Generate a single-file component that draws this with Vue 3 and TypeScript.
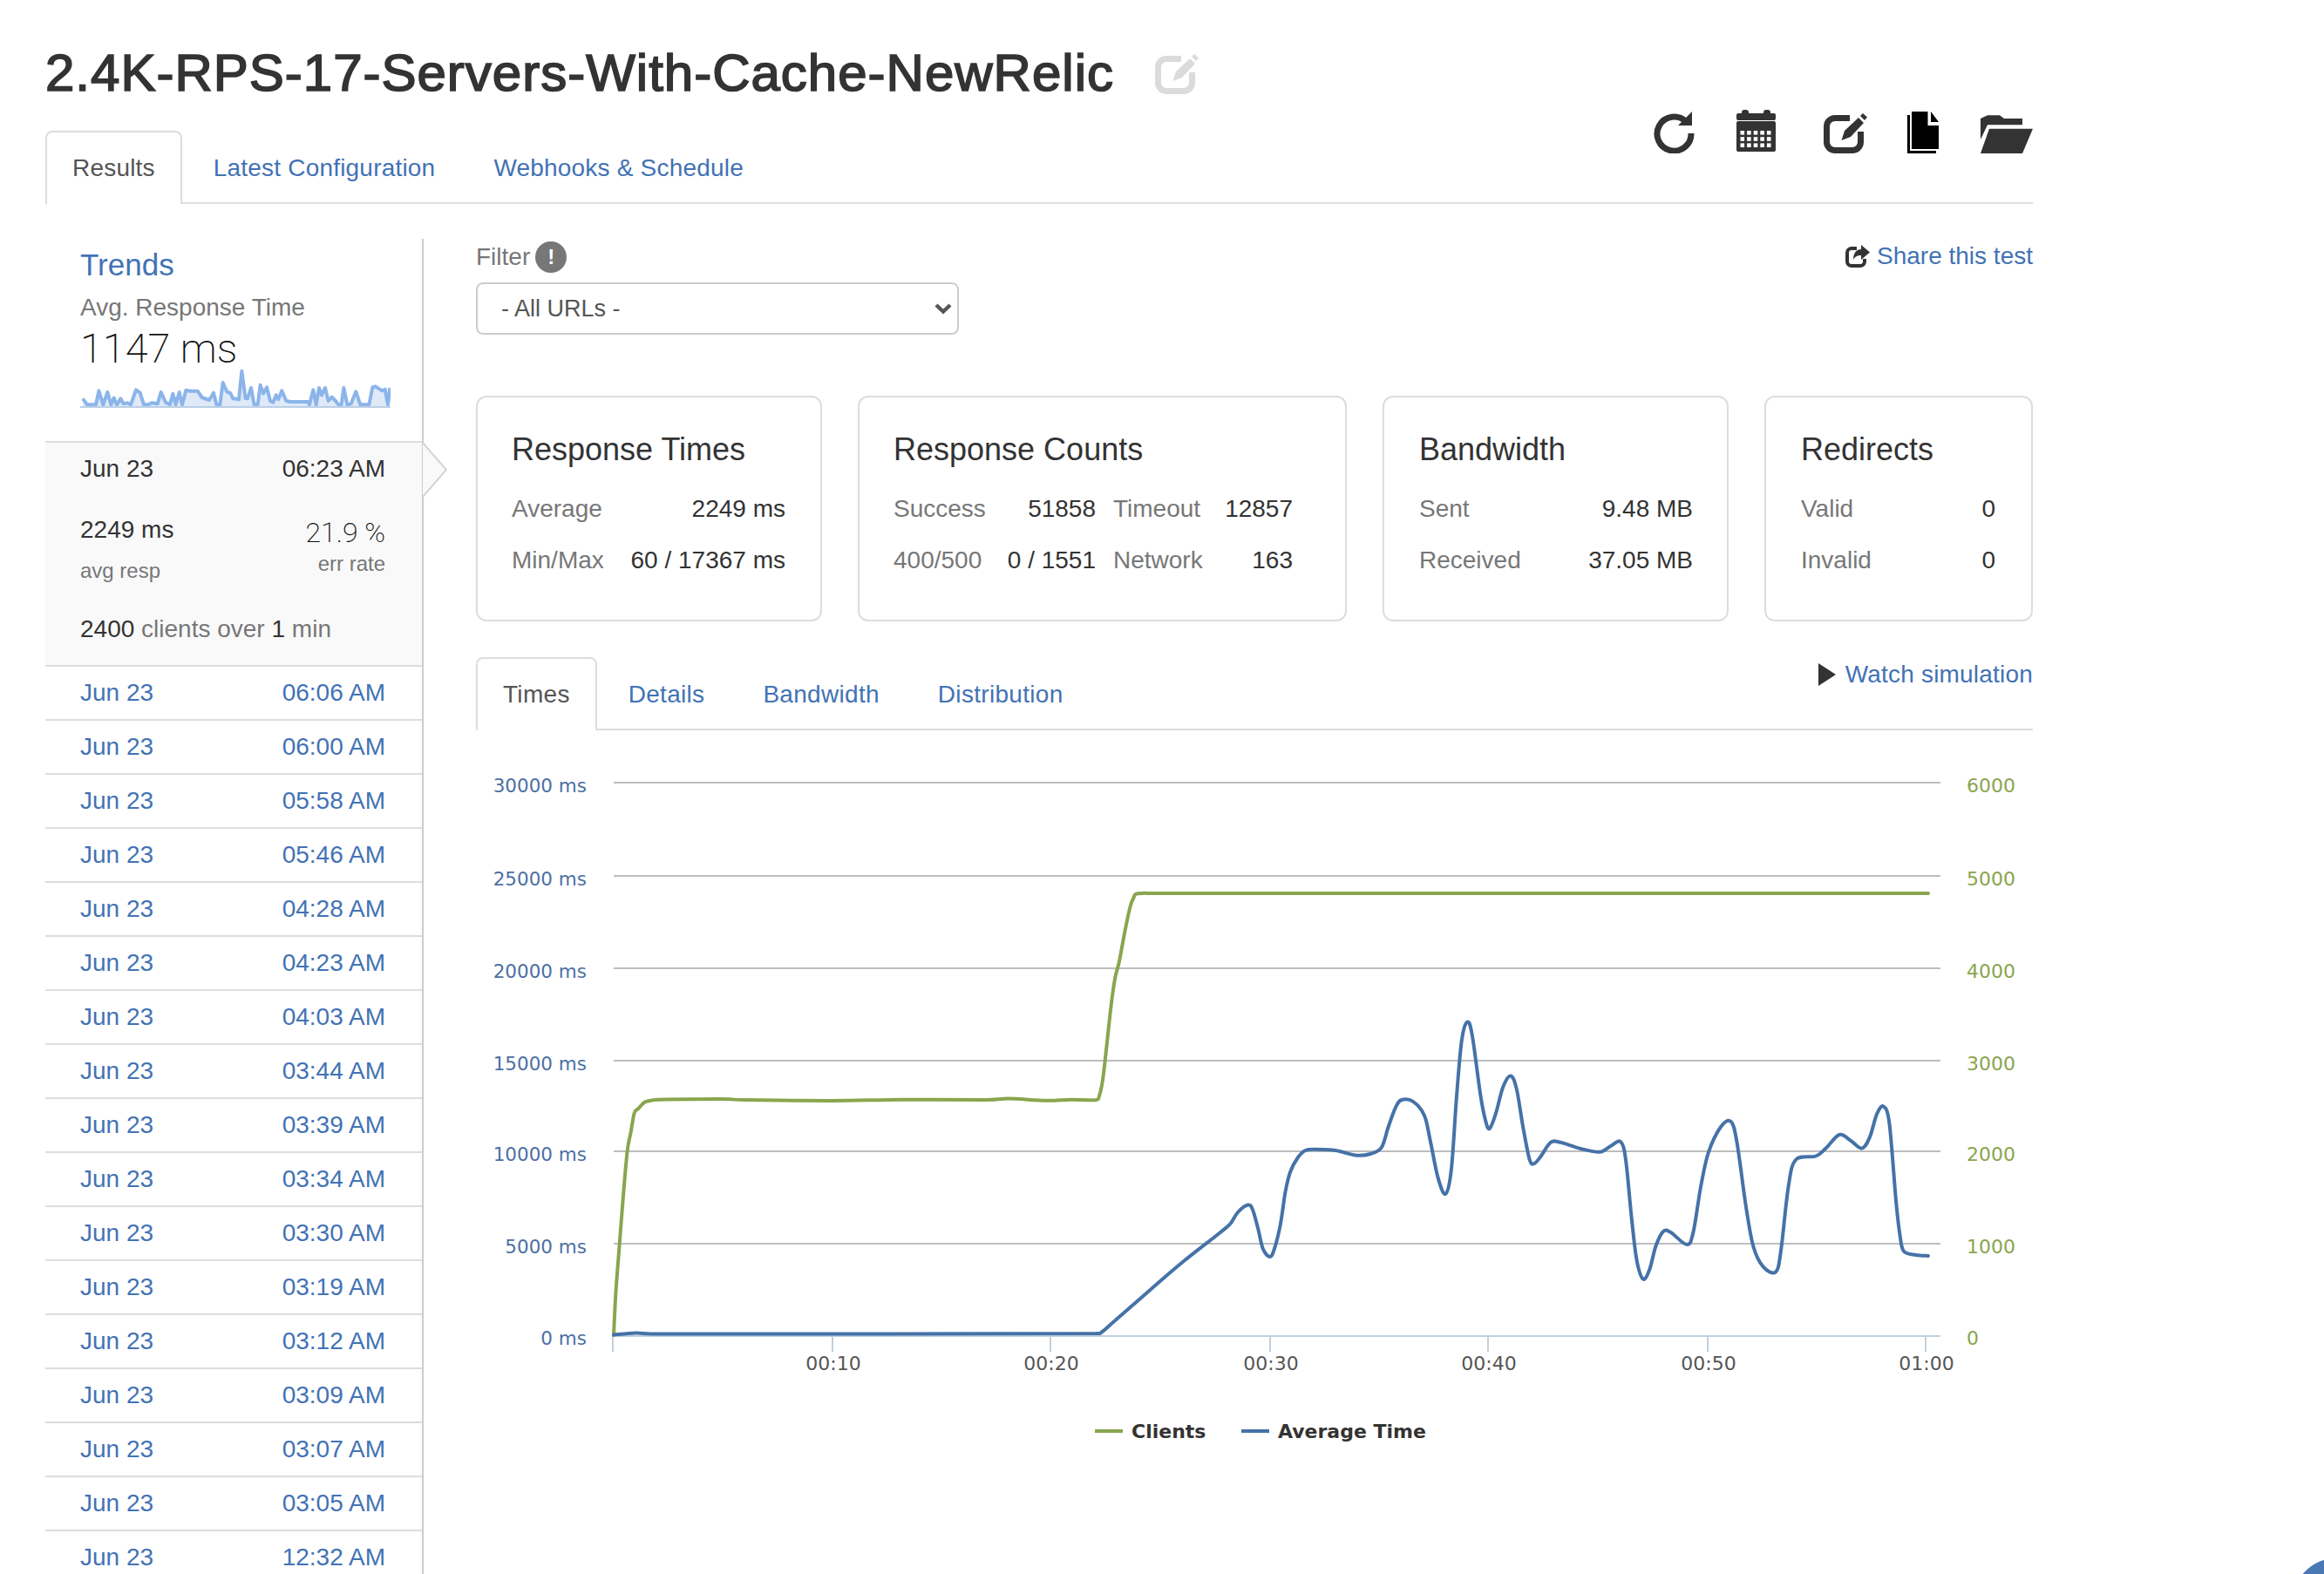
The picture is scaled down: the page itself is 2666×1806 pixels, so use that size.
<script setup lang="ts">
type Pt = [number, number];

const history = [
  '06:06 AM', '06:00 AM', '05:58 AM', '05:46 AM', '04:28 AM', '04:23 AM',
  '04:03 AM', '03:44 AM', '03:39 AM', '03:34 AM', '03:30 AM', '03:19 AM',
  '03:12 AM', '03:09 AM', '03:07 AM', '03:05 AM', '12:32 AM',
];

const calendarCells: Pt[] = [];
for (let row = 0; row < 3; row++) {
  for (let col = 0; col < 5; col++) {
    calendarCells.push([4.5 + col * 7.6, 24 + row * 7.2]);
  }
}

// sparkline points, in px of its own 356x46 box
const sparkRaw: Pt[] = [
  [75,172],[90,193],[120,193],[130,145],[145,193],[160,150],[172,193],[182,170],[192,193],[205,172],
  [215,190],[228,187],[240,193],[258,142],[272,152],[285,193],[300,193],[312,187],[332,190],[344,150],
  [360,185],[375,193],[385,155],[395,193],[407,150],[417,193],[430,143],[445,146],[470,146],[485,168],
  [510,177],[525,152],[535,193],[547,193],[557,117],[572,150],[582,152],[592,172],[612,175],[622,77],
  [635,172],[642,172],[654,135],[665,193],[677,193],[686,125],[696,155],[708,133],[720,180],[730,185],
  [740,160],[748,175],[760,145],[775,180],[790,183],[850,183],[855,193],[868,142],[878,193],[888,135],
  [897,160],[909,135],[920,180],[932,167],[945,180],[955,193],[965,193],[973,135],[985,193],[998,190],
  [1015,148],[1030,193],[1060,193],[1072,133],[1082,130],[1105,145],[1115,140],[1125,193],[1132,135],
];
const spark = sparkRaw.map(([x, y]): Pt => [x / 3 - 22, y / 3 - 23]);
const sparkLine = 'M' + spark.map((p) => p.join(' ')).join('L');
const sparkArea = `${sparkLine}L${spark[spark.length - 1][0]} 44L${spark[0][0]} 44Z`;

// chart data is in page px, the svg viewBox starts at the chart's page offset
const clients: Pt[] = [
  [704,1532],[706.5,1482],[710.5,1430],[715,1372],[719.7,1320],[723.7,1299],[727.7,1277],[732.3,1272],
  [739,1265],[746.6,1262.7],[755,1261.7],[827,1261],[855.7,1262],[953,1263],[1033.6,1261.7],[1131,1262],
  [1157,1260.6],[1200,1262.7],[1228.8,1261.7],[1257.5,1262],[1261,1257.5],[1265,1239],[1269,1205],
  [1274.7,1153],[1279.3,1121.5],[1284,1103],[1290.8,1066.6],[1296.5,1040.4],[1300.5,1030],[1305,1025.3],
  [1343.6,1025],[2212,1025],
];
const avgTime: Pt[] = [
  [704,1531.5],[729.4,1529.5],[755,1530.5],[1257.5,1530],[1264.4,1528],[1280.5,1514],[1332,1469],[1358,1447],
  [1400,1414],[1411.5,1404],[1420,1391],[1431.6,1382.5],[1437,1388],[1443,1409],[1448.8,1432.7],[1456.8,1442],
  [1462,1432.7],[1469,1404],[1474.6,1367],[1480.4,1344],[1489,1328],[1497.6,1320],[1509,1318.7],[1532,1320],
  [1555,1325.5],[1572,1324],[1584.8,1316.6],[1592.3,1294],[1601,1270.6],[1607.8,1262],[1621,1263.8],[1634,1280],
  [1641,1310],[1649.7,1351.6],[1658.3,1370],[1665,1341],[1671,1257.5],[1676.7,1194.7],[1683,1172.8],[1688.7,1187],
  [1698.5,1257.5],[1704.2,1286],[1708.8,1295],[1715.7,1278.4],[1724.3,1247],[1733,1234.5],[1739.8,1249.6],
  [1747.3,1294],[1754.7,1330.7],[1760,1335],[1767.4,1327],[1778.8,1310.8],[1790.3,1310.8],[1813.3,1318],
  [1835,1321.8],[1847.7,1315],[1859,1310],[1865,1330.7],[1871.8,1398.7],[1877.6,1445.8],[1885,1467.7],
  [1892.5,1456],[1899.4,1430],[1908,1413],[1916.6,1414],[1935,1428],[1942.4,1414],[1951,1362],[1959.7,1322.9],
  [1974,1293],[1985.5,1286.8],[1992.4,1309.8],[2002.7,1383],[2011.3,1430],[2022.8,1453.6],[2037,1459.4],
  [2043,1435],[2051.5,1362],[2060,1330.7],[2083,1326.5],[2094.5,1317.6],[2110,1302],[2123,1308.7],[2135.9,1317.6],
  [2145,1304.6],[2153,1278.4],[2160.6,1269.5],[2167.4,1289],[2175,1377.8],[2179.5,1417],[2184,1435.8],[2198,1440],[2212,1441],
];

// catmull-rom through the points; x of the handles stays inside the segment so long gaps don't overshoot
function smooth(pts: Pt[]): string {
  let d = `M${pts[0][0]} ${pts[0][1]}`;
  for (let i = 0; i < pts.length - 1; i++) {
    const p0 = pts[Math.max(i - 1, 0)];
    const p1 = pts[i];
    const p2 = pts[i + 1];
    const p3 = pts[Math.min(i + 2, pts.length - 1)];
    const c1x = Math.min(p1[0] + (p2[0] - p0[0]) / 6, p2[0]);
    const c1y = p1[1] + (p2[1] - p0[1]) / 6;
    const c2x = Math.max(p2[0] - (p3[0] - p1[0]) / 6, p1[0]);
    const c2y = p2[1] - (p3[1] - p1[1]) / 6;
    d += `C${c1x.toFixed(1)} ${c1y.toFixed(1)} ${c2x.toFixed(1)} ${c2y.toFixed(1)} ${p2[0]} ${p2[1]}`;
  }
  return d;
}

const clientsPath = smooth(clients);
const avgPath = smooth(avgTime);

const grid = [
  { y: 898, left: '30000 ms', right: '6000' },
  { y: 1005, left: '25000 ms', right: '5000' },
  { y: 1111, left: '20000 ms', right: '4000' },
  { y: 1217, left: '15000 ms', right: '3000' },
  { y: 1321, left: '10000 ms', right: '2000' },
  { y: 1427, left: '5000 ms', right: '1000' },
];
const ticks = [
  { x: 955, label: '00:10' },
  { x: 1205, label: '00:20' },
  { x: 1457, label: '00:30' },
  { x: 1707, label: '00:40' },
  { x: 1959, label: '00:50' },
  { x: 2209, label: '01:00' },
];
</script>

<template>
  <div class="page">
    <div class="wrap">
      <div class="title-row">
        <h1 class="title">2.4K-RPS-17-Servers-With-Cache-NewRelic</h1>
        <svg class="title-edit" width="50" height="50" viewBox="0 0 50 50">
          <path d="M30 9.5H13A9.5 9.5 0 0 0 3.5 19V37A9.5 9.5 0 0 0 13 46.5H33A9.5 9.5 0 0 0 42.5 37V25" fill="none" stroke="currentColor" stroke-width="7" />
          <path d="M20.5 35L24 24L40 9L46 15L31 31Z" fill="currentColor" />
          <path d="M42 7L45 4L50 8.5L47 12Z" fill="currentColor" />
        </svg>
      </div>

      <div class="tabs">
        <a class="tab tab--active">Results</a>
        <a class="tab">Latest Configuration</a>
        <a class="tab">Webhooks &amp; Schedule</a>
        <div class="toolbar">
          <svg width="47" height="50" viewBox="0 0 47 50">
            <path d="M37 13.5A19.5 19.5 0 1 0 43 27" fill="none" stroke="#333" stroke-width="7" />
            <path d="M44 2V18H28Z" fill="#333" />
          </svg>
          <svg width="45" height="50" viewBox="0 0 45 50">
            <rect x="6" y="0" width="8" height="8" rx="3" fill="#333" />
            <rect x="31" y="0" width="8" height="8" rx="3" fill="#333" />
            <rect x="0" y="4" width="45" height="8" rx="2" fill="#333" />
            <rect x="0" y="13" width="45" height="35" rx="2" fill="#333" />
            <rect v-for="(c, i) in calendarCells" :key="i" :x="c[0]" :y="c[1]" width="4.6" height="4.6" fill="#fff" />
          </svg>
          <svg class="toolbar__edit" width="50" height="50" viewBox="0 0 50 50">
            <path d="M30 9.5H13A9.5 9.5 0 0 0 3.5 19V37A9.5 9.5 0 0 0 13 46.5H33A9.5 9.5 0 0 0 42.5 37V25" fill="none" stroke="#333" stroke-width="7" />
            <path d="M20.5 35L24 24L40 9L46 15L31 31Z" fill="#333" />
            <path d="M42 7L45 4L50 8.5L47 12Z" fill="#333" />
          </svg>
          <svg width="36" height="50" viewBox="0 0 36 50">
            <path d="M0 6H3V47H33V50H0Z" fill="#000" />
            <path d="M5 2H23.5V18H36V45H5Z" fill="#000" />
            <path d="M27 2L36 14H27Z" fill="#000" />
          </svg>
          <svg width="60" height="50" viewBox="0 0 60 50">
            <path d="M0 10L8 6.3H22L27 10H48V17.3H8L0 34Z" fill="#333" />
            <path d="M10 21.7H60L48 50H0Z" fill="#333" />
          </svg>
        </div>
      </div>

      <div class="body">
        <aside class="side">
          <div class="trends">
            <a class="trends__link">Trends</a>
            <div class="trends__label">Avg. Response Time</div>
            <div class="trends__value">1147 ms</div>
            <svg class="spark" width="356" height="46" viewBox="0 0 356 46">
              <path :d="sparkArea" fill="#dfe9f7" />
              <path :d="sparkLine" fill="none" stroke="#8bb5ea" stroke-width="4" stroke-linejoin="round" />
              <rect x="0" y="43" width="356" height="2" fill="#bccfe6" />
            </svg>
          </div>

          <div class="current">
            <div class="current__arrow">
              <svg width="30" height="64" viewBox="0 0 30 64">
                <path d="M1 1L28 32L1 63" fill="#f9f9f9" stroke="#d4d4d4" stroke-width="2" />
              </svg>
            </div>
            <div class="line">
              <span>Jun 23</span>
              <span>06:23 AM</span>
            </div>
            <div class="stats">
              <div>
                <div class="stats__num">2249 ms</div>
                <div class="stats__sub stats__sub--left">avg resp</div>
              </div>
              <div class="stats__right">
                <div class="stats__rate">21.9 %</div>
                <div class="stats__sub stats__sub--right">err rate</div>
              </div>
            </div>
            <div class="clients">2400 <span>clients over</span> 1 <span>min</span></div>
          </div>

          <a v-for="(time, i) in history" :key="i" class="line line--link">
            <span>Jun 23</span>
            <span>{{ time }}</span>
          </a>
        </aside>

        <main class="main">
          <div class="filter-row">
            <div>
              <div class="filter-label">
                Filter
                <span class="badge">!</span>
              </div>
              <div class="select-wrap">
                <select class="select">
                  <option>- All URLs -</option>
                </select>
                <svg class="select-chevron" width="20" height="14" viewBox="0 0 20 14">
                  <path d="M2 3L10 10.5L18 3" fill="none" stroke="#555" stroke-width="4.4" />
                </svg>
              </div>
            </div>
            <a class="share">
              <svg width="28" height="26" viewBox="0 0 28 26">
                <path d="M13 4H7A5 5 0 0 0 2 9V19A5 5 0 0 0 7 24H17A5 5 0 0 0 22 19V16" fill="none" stroke="#333" stroke-width="4" />
                <path d="M18 0L28 8.5L18 17V12C14 12 11 13 9 17C9 10 12 5 18 5Z" fill="#333" />
              </svg>
              <span>Share this test</span>
            </a>
          </div>

          <div class="cards">
            <section class="card card--times">
              <h3>Response Times</h3>
              <div class="kv"><span>Average</span><b>2249 ms</b></div>
              <div class="kv"><span>Min/Max</span><b>60 / 17367 ms</b></div>
            </section>
            <section class="card card--counts">
              <h3>Response Counts</h3>
              <div class="counts">
                <span>Success</span><b>51858</b><span class="counts__pad">Timeout</span><b>12857</b>
                <span>400/500</span><b>0 / 1551</b><span class="counts__pad">Network</span><b>163</b>
              </div>
            </section>
            <section class="card card--band">
              <h3>Bandwidth</h3>
              <div class="kv"><span>Sent</span><b>9.48 MB</b></div>
              <div class="kv"><span>Received</span><b>37.05 MB</b></div>
            </section>
            <section class="card card--redirects">
              <h3>Redirects</h3>
              <div class="kv"><span>Valid</span><b>0</b></div>
              <div class="kv"><span>Invalid</span><b>0</b></div>
            </section>
          </div>

          <div class="tabs tabs--sub">
            <a class="tab tab--active">Times</a>
            <a class="tab">Details</a>
            <a class="tab">Bandwidth</a>
            <a class="tab">Distribution</a>
            <a class="watch">
              <svg width="20" height="26" viewBox="0 0 20 26"><path d="M0 0L20 13L0 26Z" fill="#333" /></svg>
              <span>Watch simulation</span>
            </a>
          </div>

          <svg class="chart" width="1786" height="830" viewBox="546 838 1786 830">
            <g v-for="g in grid" :key="g.y">
              <line x1="704" x2="2226" :y1="g.y" :y2="g.y" stroke="#bdbdbd" stroke-width="2" />
              <text x="673" :y="g.y + 10.5" class="axis axis--left" text-anchor="end">{{ g.left }}</text>
              <text x="2256" :y="g.y + 10.5" class="axis axis--right">{{ g.right }}</text>
            </g>
            <text x="673" y="1543" class="axis axis--left" text-anchor="end">0 ms</text>
            <text x="2256" y="1543" class="axis axis--right">0</text>

            <line x1="703" x2="2226" y1="1533" y2="1533" stroke="#c0d0e0" stroke-width="2" />
            <line x1="703" x2="703" y1="1533" y2="1551" stroke="#c0d0e0" stroke-width="2" />
            <g v-for="t in ticks" :key="t.x">
              <line :x1="t.x" :x2="t.x" y1="1533" y2="1551" stroke="#c0d0e0" stroke-width="2" />
              <text :x="t.x + 1" y="1572" class="axis axis--x" text-anchor="middle">{{ t.label }}</text>
            </g>

            <path :d="clientsPath" fill="none" stroke="#89a54e" stroke-width="4" stroke-linecap="round" />
            <path :d="avgPath" fill="none" stroke="#4572a7" stroke-width="4" stroke-linecap="round" />

            <line x1="1256" x2="1288" y1="1642" y2="1642" stroke="#89a54e" stroke-width="4" />
            <text x="1298" y="1650" class="legend">Clients</text>
            <line x1="1424" x2="1456" y1="1642" y2="1642" stroke="#4572a7" stroke-width="4" />
            <text x="1466" y="1650" class="legend">Average Time</text>
          </svg>
        </main>
      </div>
    </div>
    <div class="chat-bubble"></div>
  </div>
</template>

<style scoped>
.page {
  position: relative;
  width: 2666px;
  height: 1806px;
  overflow: hidden;
  background: #fff;
  color: #333;
  font-family: "Liberation Sans", Arial, sans-serif;
  font-size: 28px;
  line-height: 40px;
}

.wrap {
  width: 2280px;
  margin-left: 52px;
}

/* Header */
.title-row {
  display: flex;
  align-items: flex-start;
  padding-top: 51px;
  height: 66px;
}

.title {
  margin: 0;
  font-size: 60px;
  line-height: 66px;
  font-weight: 400;
  letter-spacing: 1px;
  color: #333;
  -webkit-text-stroke: 1.7px #333;
  white-space: nowrap;
}

.title-edit {
  margin: 7px 0 0 47px;
  color: #dbdbdb;
}

/* Tabs */
.tabs {
  display: flex;
  margin-top: 33px;
  border-bottom: 2px solid #ddd;
  height: 84px;
  box-sizing: border-box;
}

.tabs--sub {
  position: relative;
  margin-top: 41px;
}

.tabs--sub .tab {
  letter-spacing: 0.3px;
}

.tab {
  height: 84px;
  box-sizing: border-box;
  padding: 21px 29px 19px;
  margin-right: 5px;
  border: 2px solid transparent;
  border-bottom: 0;
  border-radius: 8px 8px 0 0;
  color: #4272b5;
  letter-spacing: 0.2px;
  white-space: nowrap;
}

.tab--active {
  border-color: #ddd;
  background: #fff;
  color: #555;
}

.toolbar {
  display: flex;
  gap: 48px;
  margin: -24px 0 0 auto;
  height: 50px;
}

.toolbar__edit {
  margin: 0 -2px 0 7px;
}

/* Layout */
.body {
  display: flex;
  gap: 60px;
  margin-top: 40px;
}

.side {
  position: relative;
  flex: 0 0 434px;
  height: 1532px;
  box-sizing: border-box;
  border-right: 2px solid #ccc;
}

.main {
  flex: 1;
  min-width: 0;
}

/* Sidebar */
.trends {
  padding: 10px 0 37px 40px;
}

.trends__link {
  display: block;
  font-size: 35px;
  color: #4272b5;
}

.trends__label {
  margin-top: 9px;
  color: #777;
}

.trends__value {
  margin-top: 1px;
  font-family: Roboto, "Liberation Sans", sans-serif;
  font-weight: 200;
  font-size: 47px;
  line-height: 52px;
  color: #111;
}

.spark {
  display: block;
  margin-top: -3px;
}

.current {
  position: relative;
  box-sizing: border-box;
  height: 259px;
  padding: 10px 42px 0 40px;
  background: #f9f9f9;
  border-top: 2px solid #ddd;
  border-bottom: 2px solid #ddd;
}

.current__arrow {
  position: absolute;
  top: -1px;
  left: 432px;
  height: 64px;
  line-height: 0;
}

.current .line {
  padding: 0;
  height: 40px;
  border: 0;
  color: #333;
}

.line {
  display: flex;
  justify-content: space-between;
  align-items: center;
  box-sizing: border-box;
  height: 62px;
  padding: 0 42px 0 40px;
  border-bottom: 2px solid #ddd;
}

.line--link {
  color: #4272b5;
}

.stats {
  display: flex;
  justify-content: space-between;
  margin-top: 30px;
}

.stats__right {
  padding-top: 3px;
  text-align: right;
}

.stats__rate {
  font-family: Roboto, "Liberation Sans", sans-serif;
  font-weight: 200;
  font-size: 32px;
  color: #111;
}

.stats__sub {
  font-size: 24px;
  line-height: 30px;
  color: #777;
}

.stats__sub--left {
  margin-top: 12px;
}

.stats__sub--right {
  margin-top: 1px;
}

.clients {
  margin-top: 32px;
}

.clients span {
  color: #777;
}

/* Filter */
.filter-row {
  display: flex;
  justify-content: space-between;
  align-items: flex-start;
}

.filter-label {
  display: flex;
  align-items: center;
  gap: 6px;
  margin-top: 1px;
  color: #777;
}

.badge {
  display: flex;
  align-items: center;
  justify-content: center;
  width: 36px;
  height: 36px;
  border-radius: 50%;
  background: #777;
  color: #fff;
  font-size: 24px;
  font-weight: 700;
}

.select-wrap {
  position: relative;
  margin-top: 9px;
  width: 554px;
  height: 60px;
}

.select {
  display: block;
  width: 100%;
  height: 100%;
  box-sizing: border-box;
  padding: 0 27px;
  appearance: none;
  background: #fff;
  border: 2px solid #ccc;
  border-radius: 8px;
  color: #555;
  font-family: inherit;
  font-size: 27px;
}

.select-chevron {
  position: absolute;
  top: 23px;
  right: 8px;
}

.share {
  display: flex;
  align-items: center;
  gap: 8px;
  color: #4272b5;
}

/* Cards */
.cards {
  display: flex;
  justify-content: space-between;
  margin-top: 70px;
}

.card {
  box-sizing: border-box;
  height: 259px;
  padding: 38px 40px 0 39px;
  border: 2px solid #ddd;
  border-radius: 12px;
}

.card--times { width: 397px; }
.card--counts { width: 561px; }
.card--band { width: 397px; padding: 38px 39px 0 40px; }
.card--redirects { width: 308px; padding: 38px 41px 0 40px; }

.card h3 {
  margin: 0 0 16px;
  font-size: 36px;
  line-height: 44px;
  font-weight: 400;
}

.card b {
  font-weight: 400;
  color: #333;
  text-align: right;
  white-space: nowrap;
}

.card span {
  color: #777;
}

.kv {
  display: flex;
  justify-content: space-between;
  height: 59px;
  align-items: center;
}

.counts {
  display: grid;
  grid-template-columns: 130px 102px 148px 78px;
  grid-auto-rows: 59px;
  align-items: center;
}

.counts__pad {
  padding-left: 20px;
}

/* Watch simulation */
.watch {
  display: flex;
  align-items: center;
  gap: 11px;
  margin-left: auto;
  height: 40px;
  color: #4272b5;
  letter-spacing: 0.2px;
}

/* Chart */
.chart {
  display: block;
}

.axis {
  font-family: "DejaVu Sans", sans-serif;
  font-size: 21.5px;
}

.axis--left { fill: #4c6fa4; }
.axis--right { fill: #89a54e; font-size: 22px; }
.axis--x { fill: #555; font-size: 22px; }

.legend {
  font-family: "DejaVu Sans", sans-serif;
  font-size: 22px;
  font-weight: 700;
  fill: #333;
}

.chat-bubble {
  position: absolute;
  left: 2630px;
  top: 1788px;
  width: 100px;
  height: 100px;
  border-radius: 50%;
  background: #4a78b5;
}
</style>

<style>
body {
  overflow: hidden;
}
</style>
